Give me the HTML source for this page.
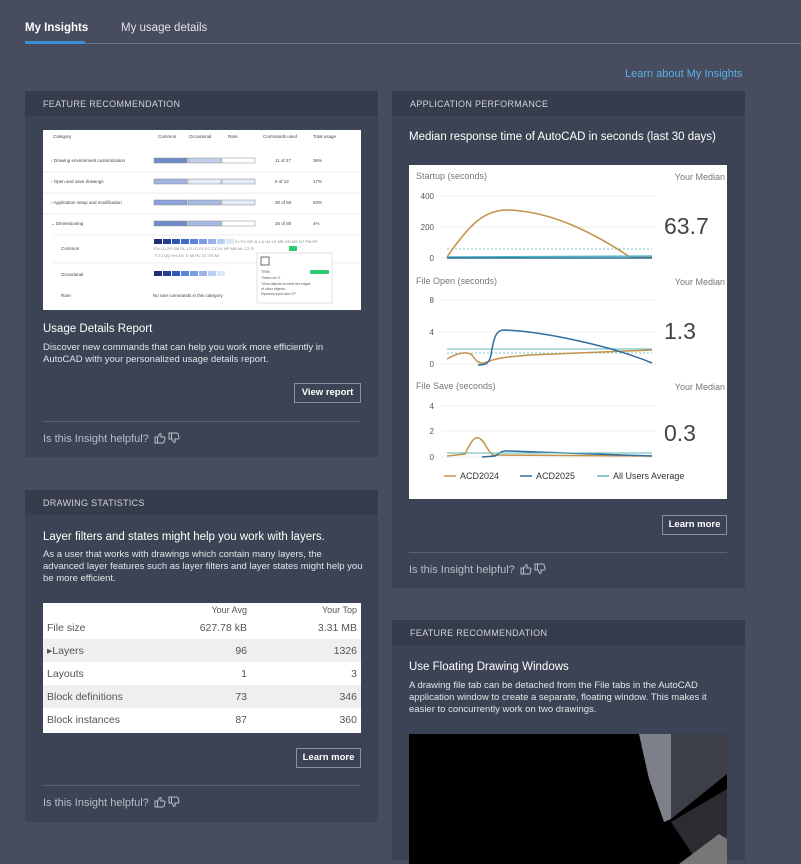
<!DOCTYPE html>
<html><head><meta charset="utf-8"><style>
*{margin:0;padding:0;box-sizing:border-box}
body{width:801px;height:851px;background:#474d5f;font-family:"Liberation Sans",sans-serif;color:#e6e8ec;position:relative;overflow:hidden}
.a{position:absolute}
.card{position:absolute;background:#3c4354}
.hd{position:absolute;left:0;right:0;top:0;height:25px;background:#363c4c;font-size:9px;letter-spacing:.3px;color:#d0d3da;padding:8px 0 0 18px}
.t{font-size:11.5px;color:#fff}
.p{font-size:9.5px;line-height:12px;color:#e2e4e8}
.btn{position:absolute;border:1px solid #8b919e;font-size:9.5px;font-weight:bold;color:#fff;text-align:center;line-height:18px;height:20px}
.hr{position:absolute;height:1px;background:#5b6172}
.help{position:absolute;font-size:11px;color:#b9bdc6;white-space:nowrap}
.help svg{vertical-align:-2px;margin-left:2px}
table{border-collapse:collapse;width:100%;font-size:10.5px;color:#555}
td{height:23px;padding:0 4px}
</style></head><body>
<div class="a" style="left:25px;top:22px;font-size:11.5px;font-weight:bold;color:#fff">My Insights</div>
<div class="a" style="left:121px;top:22px;font-size:11.5px;color:#dfe2e8">My usage details</div>
<div class="a" style="left:25px;top:43px;width:776px;height:1px;background:#6d7384"></div>
<div class="a" style="left:25px;top:41px;width:60px;height:3px;background:#3c8fd0"></div>
<div class="a" style="left:625px;top:68px;font-size:11px;color:#5ab0e8">Learn about My Insights</div>

<!-- card 1 -->
<div class="card" style="left:25px;top:91px;width:353px;height:366px">
<div class="hd">FEATURE RECOMMENDATION</div>
<div class="a" style="left:18px;top:39px;width:318px;height:180px;background:#fff;font-size:4.5px;color:#555">
<svg width="318" height="180">
<g font-size="4.5" fill="#444" font-family="Liberation Sans">
<text x="10" y="8">Category</text><text x="115" y="8">Common</text><text x="146" y="8">Occasional</text><text x="185" y="8">Rare</text><text x="220" y="8">Commands used</text><text x="270" y="8">Total usage</text>
<text x="8" y="32">› Drawing environment customization</text><text x="8" y="53">› Open and save drawings</text><text x="8" y="74">› Application setup and modification</text><text x="8" y="95">⌄ Dimensioning</text>
<text x="18" y="120">Common</text><text x="18" y="146">Occasional</text><text x="18" y="167">Rare</text><text x="110" y="167">No rare commands in this category</text>
<text x="232" y="32">11 of 27</text><text x="232" y="53">6 of 12</text><text x="232" y="74">30 of 50</text><text x="232" y="95">25 of 80</text>
<text x="270" y="32">36%</text><text x="270" y="53">17%</text><text x="270" y="74">53%</text><text x="270" y="95">4%</text>
</g>
<g stroke="#888" stroke-width=".5">
<rect x="111" y="28" width="33" height="5" fill="#6d8cc8"/><rect x="145" y="28" width="33" height="5" fill="#c3d0ec"/><rect x="179" y="28" width="33" height="5" fill="#fff"/>
<rect x="111" y="49" width="33" height="5" fill="#9fb4e0"/><rect x="145" y="49" width="33" height="5" fill="#e4eaf7"/><rect x="179" y="49" width="33" height="5" fill="#e4eaf7"/>
<rect x="111" y="70" width="33" height="5" fill="#8aa3da"/><rect x="145" y="70" width="33" height="5" fill="#a6bae3"/><rect x="179" y="70" width="33" height="5" fill="#e4eaf7"/>
<rect x="111" y="91" width="33" height="5" fill="#6d8cc8"/><rect x="145" y="91" width="33" height="5" fill="#a6bae3"/><rect x="179" y="91" width="33" height="5" fill="#fff"/>
</g>
<line x1="0" y1="42" x2="318" y2="42" stroke="#eee"/><line x1="0" y1="63" x2="318" y2="63" stroke="#eee"/><line x1="0" y1="84" x2="318" y2="84" stroke="#eee"/><line x1="10" y1="105" x2="318" y2="105" stroke="#eee"/><line x1="10" y1="133" x2="318" y2="133" stroke="#eee"/>
<rect x="111" y="109" width="8" height="5" fill="#1d3170"/><rect x="120" y="109" width="8" height="5" fill="#21408e"/><rect x="129" y="109" width="8" height="5" fill="#2d58b5"/><rect x="138" y="109" width="8" height="5" fill="#3f6cc8"/><rect x="147" y="109" width="8" height="5" fill="#5b84d8"/><rect x="156" y="109" width="8" height="5" fill="#7a9ce2"/><rect x="165" y="109" width="8" height="5" fill="#9ab4ea"/><rect x="174" y="109" width="8" height="5" fill="#bacdf2"/><rect x="183" y="109" width="8" height="5" fill="#dde6f8"/>
<rect x="111" y="141" width="8" height="5" fill="#1d3170"/><rect x="120" y="141" width="8" height="5" fill="#21408e"/><rect x="129" y="141" width="8" height="5" fill="#2d58b5"/><rect x="138" y="141" width="8" height="5" fill="#5b84d8"/><rect x="147" y="141" width="8" height="5" fill="#7a9ce2"/><rect x="156" y="141" width="8" height="5" fill="#9ab4ea"/><rect x="165" y="141" width="8" height="5" fill="#bacdf2"/><rect x="174" y="141" width="8" height="5" fill="#dde6f8"/>
<g font-size="4" fill="#888"><text x="192" y="113">FL  FV  GR  JL  LA  LM  LS  MB  OD  MS  NT  PM  PE</text><text x="111" y="120">EN  LD  ZR  SM  DL  LG  LO  FL  FC  CZ  LK  NP  MB  ML  CZ  FI</text><text x="111" y="127">TI  TJ  QQ  HH  AG  TI  MI  RC  ST  SS  MI</text></g>
<rect x="246" y="116" width="8" height="5" fill="#2ecc71"/>
<rect x="214" y="123" width="75" height="50" fill="#fff" stroke="#ccc" stroke-width=".6"/>
<rect x="218" y="127" width="8" height="8" fill="none" stroke="#333" stroke-width=".7"/>
<rect x="267" y="140" width="19" height="4" fill="#2ecc71"/>
<g font-size="3.5" fill="#555"><text x="218" y="143">TRIM</text><text x="218" y="149">Times run: 0</text><text x="218" y="155">Trims objects to meet the edges</text><text x="218" y="160">of other objects.</text><text x="218" y="165">Dynamic input and CP</text></g>
</svg></div>
<div class="t a" style="left:18px;top:232px">Usage Details Report</div>
<div class="p a" style="left:18px;top:251px;width:320px">Discover new commands that can help you work more efficiently in AutoCAD with your personalized usage details report.</div>
<div class="btn" style="left:269px;top:292px;width:67px">View report</div>
<div class="hr" style="left:18px;top:330px;width:318px"></div>
<div class="help" style="left:18px;top:341px">Is this Insight helpful? <svg width="26" height="12" viewBox="0 0 26 12" fill="none" stroke="#b9bdc6" stroke-width="1"><path d="M1 5h2.5v6H1zM3.5 5.5L6 1.5c1 0 1.5.6 1.2 2L6.8 5H10c.8 0 1.2.6 1 1.3l-1 4c-.2.5-.5.7-1 .7H3.5"/><path d="M15 7h2.5V1H15zM17.5 6.5L20 10.5c1 0 1.5-.6 1.2-2L20.8 7H24c.8 0 1.2-.6 1-1.3l-1-4c-.2-.5-.5-.7-1-.7h-5.5"/></svg></div>
</div>

<!-- card 2 -->
<div class="card" style="left:25px;top:490px;width:353px;height:332px">
<div class="hd">DRAWING STATISTICS</div>
<div class="t a" style="left:18px;top:41px">Layer filters and states might help you work with layers.</div>
<div class="p a" style="left:18px;top:59px;width:320px">As a user that works with drawings which contain many layers, the advanced layer features such as layer filters and layer states might help you be more efficient.</div>
<div class="a" style="left:18px;top:113px;width:318px;height:130px;background:#fff">
<table>
<tr style="font-size:9px;color:#555"><td style="height:13px"></td><td style="height:13px;text-align:right;width:90px">Your Avg</td><td style="height:13px;text-align:right;width:110px">Your Top</td></tr>
<tr><td style="height:21px">File size</td><td style="text-align:right">627.78 kB</td><td style="text-align:right">3.31 MB</td></tr>
<tr style="background:#efefef"><td>▸Layers</td><td style="text-align:right">96</td><td style="text-align:right">1326</td></tr>
<tr><td>Layouts</td><td style="text-align:right">1</td><td style="text-align:right">3</td></tr>
<tr style="background:#efefef"><td>Block definitions</td><td style="text-align:right">73</td><td style="text-align:right">346</td></tr>
<tr><td>Block instances</td><td style="text-align:right">87</td><td style="text-align:right">360</td></tr>
</table></div>
<div class="btn" style="left:271px;top:258px;width:65px">Learn more</div>
<div class="hr" style="left:18px;top:295px;width:318px"></div>
<div class="help" style="left:18px;top:306px">Is this Insight helpful? <svg width="26" height="12" viewBox="0 0 26 12" fill="none" stroke="#b9bdc6" stroke-width="1"><path d="M1 5h2.5v6H1zM3.5 5.5L6 1.5c1 0 1.5.6 1.2 2L6.8 5H10c.8 0 1.2.6 1 1.3l-1 4c-.2.5-.5.7-1 .7H3.5"/><path d="M15 7h2.5V1H15zM17.5 6.5L20 10.5c1 0 1.5-.6 1.2-2L20.8 7H24c.8 0 1.2-.6 1-1.3l-1-4c-.2-.5-.5-.7-1-.7h-5.5"/></svg></div>
</div>

<!-- card 3 -->
<div class="card" style="left:392px;top:91px;width:353px;height:497px">
<div class="hd">APPLICATION PERFORMANCE</div>
<div class="t a" style="left:17px;top:40px">Median response time of AutoCAD in seconds (last 30 days)</div>
<div class="a" style="left:17px;top:74px;width:318px;height:334px;background:#fff">
<svg width="318" height="334" font-family="Liberation Sans">
<g font-size="9" fill="#777"><text x="7" y="14">Startup (seconds)</text><text x="316" y="15" text-anchor="end">Your Median</text>
<text x="7" y="119">File Open (seconds)</text><text x="316" y="120" text-anchor="end">Your Median</text>
<text x="7" y="224">File Save (seconds)</text><text x="316" y="225" text-anchor="end">Your Median</text></g>
<g font-size="8" fill="#555" text-anchor="end"><text x="25" y="34">400</text><text x="25" y="65">200</text><text x="25" y="96">0</text>
<text x="25" y="138">8</text><text x="25" y="170">4</text><text x="25" y="202">0</text>
<text x="25" y="244">4</text><text x="25" y="269">2</text><text x="25" y="295">0</text></g>
<g stroke="#eee"><line x1="32" y1="31" x2="247" y2="31"/><line x1="32" y1="62" x2="247" y2="62"/><line x1="32" y1="93" x2="247" y2="93"/>
<line x1="32" y1="135" x2="247" y2="135"/><line x1="32" y1="167" x2="247" y2="167"/><line x1="32" y1="199" x2="247" y2="199"/>
<line x1="32" y1="241" x2="247" y2="241"/><line x1="32" y1="266" x2="247" y2="266"/><line x1="32" y1="292" x2="247" y2="292"/></g>
<g font-size="23" fill="#444"><text x="255" y="69">63.7</text><text x="255" y="174">1.3</text><text x="255" y="276">0.3</text></g>
<g fill="none" stroke-width="1.5">
<line x1="38" y1="84" x2="243" y2="84" stroke="#5cb8b0" stroke-width=".8" stroke-dasharray="2,2"/>
<path d="M38 92 C60 60 75 45 98 45 C140 46 180 65 221 92 L243 92" stroke="#c4924a"/>
<path d="M38 92 L243 91" stroke="#4fb8c0"/><path d="M38 93 L243 93" stroke="#2f6e9e"/>
<line x1="38" y1="184" x2="243" y2="184" stroke="#5cb8b0" stroke-width="1"/>
<line x1="38" y1="188" x2="243" y2="188" stroke="#5cb8b0" stroke-width=".8" stroke-dasharray="2,2"/>
<path d="M38 194 C48 188 58 186 63 190 C67 196 70 199 75 198 C90 192 100 192 120 190 L243 185" stroke="#c4924a"/>
<path d="M69 200 C78 200 80 198 82 190 C85 170 88 165 95 165 C130 166 200 180 243 198" stroke="#2f6e9e"/>
<path d="M38 291 L56 289 C62 276 66 271 70 273 C76 276 78 286 84 290 L243 291" stroke="#c4924a"/>
<path d="M73 292 L86 291 C90 289 92 285 100 286 L243 291" stroke="#2f6e9e"/>
<line x1="38" y1="288" x2="243" y2="288" stroke="#5cb8b0" stroke-width="1"/>
</g>
<g font-size="9" fill="#333"><line x1="35" y1="311" x2="47" y2="311" stroke="#c4924a" stroke-width="1.5"/><text x="51" y="314">ACD2024</text>
<line x1="111" y1="311" x2="123" y2="311" stroke="#2f6e9e" stroke-width="1.5"/><text x="127" y="314">ACD2025</text>
<line x1="188" y1="311" x2="200" y2="311" stroke="#5cb8b0" stroke-width="1.5"/><text x="204" y="314">All Users Average</text></g>
</svg></div>
<div class="btn" style="left:270px;top:424px;width:65px">Learn more</div>
<div class="hr" style="left:17px;top:461px;width:318px"></div>
<div class="help" style="left:17px;top:472px">Is this Insight helpful? <svg width="26" height="12" viewBox="0 0 26 12" fill="none" stroke="#b9bdc6" stroke-width="1"><path d="M1 5h2.5v6H1zM3.5 5.5L6 1.5c1 0 1.5.6 1.2 2L6.8 5H10c.8 0 1.2.6 1 1.3l-1 4c-.2.5-.5.7-1 .7H3.5"/><path d="M15 7h2.5V1H15zM17.5 6.5L20 10.5c1 0 1.5-.6 1.2-2L20.8 7H24c.8 0 1.2-.6 1-1.3l-1-4c-.2-.5-.5-.7-1-.7h-5.5"/></svg></div>
</div>

<!-- card 4 -->
<div class="card" style="left:392px;top:620px;width:353px;height:240px">
<div class="hd">FEATURE RECOMMENDATION</div>
<div class="t a" style="left:17px;top:41px">Use Floating Drawing Windows</div>
<div class="p a" style="left:17px;top:60px;width:325px">A drawing file tab can be detached from the File tabs in the AutoCAD application window to create a separate, floating window. This makes it easier to concurrently work on two drawings.</div>
<div class="a" style="left:17px;top:114px;width:318px;height:130px;background:#000;overflow:hidden">
<svg width="318" height="130"><polygon points="230,0 262,0 262,85 255,88 240,45" fill="#7d8089"/><polygon points="262,0 318,0 318,40 262,85" fill="#3c3f47"/><polygon points="262,88 318,55 318,130 290,130" fill="#2a2c32"/><polygon points="270,130 310,100 318,105 318,130" fill="#777"/></svg>
</div>
</div>
</body></html>
